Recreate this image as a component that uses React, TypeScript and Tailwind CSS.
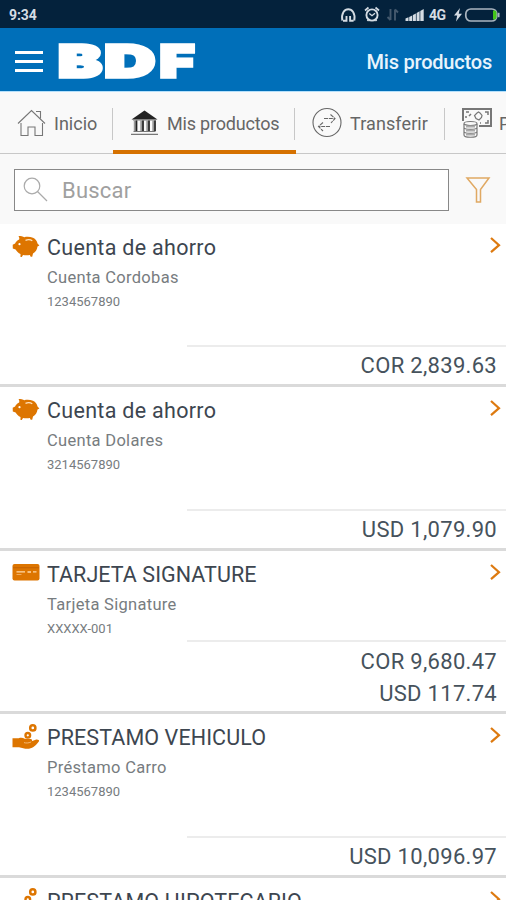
import type { ReactNode } from 'react';
import clsx from 'clsx';

type IconKind = 'piggy' | 'card' | 'loan';

interface Product {
  icon: IconKind;
  title: string;
  titleClass: string;
  subtitle: string;
  number: string;
  balances: string[];
}

const PRODUCTS: Product[] = [
  {
    icon: 'piggy',
    title: 'Cuenta de ahorro',
    titleClass: 'tracking-[0.3px]',
    subtitle: 'Cuenta Cordobas',
    number: '1234567890',
    balances: ['COR 2,839.63'],
  },
  {
    icon: 'piggy',
    title: 'Cuenta de ahorro',
    titleClass: 'tracking-[0.3px]',
    subtitle: 'Cuenta Dolares',
    number: '3214567890',
    balances: ['USD 1,079.90'],
  },
  {
    icon: 'card',
    title: 'TARJETA SIGNATURE',
    titleClass: 'tracking-[0.05px]',
    subtitle: 'Tarjeta Signature',
    number: 'XXXXX-001',
    balances: ['COR 9,680.47', 'USD 117.74'],
  },
  {
    icon: 'loan',
    title: 'PRESTAMO VEHICULO',
    titleClass: 'tracking-[0.1px]',
    subtitle: 'Préstamo Carro',
    number: '1234567890',
    balances: ['USD 10,096.97'],
  },
  {
    icon: 'loan',
    title: 'PRESTAMO HIPOTECARIO',
    titleClass: 'tracking-[0.1px]',
    subtitle: 'Préstamo Casa',
    number: '1234567890',
    balances: [],
  },
];

function ProductIcon({ kind }: { kind: IconKind }) {
  if (kind === 'piggy') {
    return (
      <svg className="mt-px" width="28" height="24" viewBox="0 0 28 24" fill="#dd7500">
        <path d="M6.500 1c2.300 0 4.500.6 5.800 1.200C14.500 1.500 18 1.500 21 2.800c2.600 1.200 4.100 3.200 4.500 5.800l1.900 2-1.900.8c-.4 3-2 5.700-4.500 7.200L20.200 21.800h-1.500l-.9-1.800c-2.500.5-4.800.4-6.800-.1L9.800 22H8.500l0-3C6.300 17.800 4.600 16.200 3.600 14.400L.8 13.400.7 9.800l2.400-1.300c.8-1.600 2.100-2.900 4-3.900C7.600 3.500 7.200 2 6.500 1z" />
        <circle cx="7.500" cy="9.200" r="1.100" fill="#fff" />
        <path d="M13.500 5.400c2.300-1 5-.8 6.800.4" fill="none" stroke="#ffe3bf" strokeWidth="1.200" />
      </svg>
    );
  }
  if (kind === 'card') {
    return (
      <svg width="28" height="24" viewBox="0 0 28 24">
        <rect x="0.500" y="3" width="27" height="16.600" rx="2" fill="#dd7500" />
        <path d="M1 6.700h26" stroke="#c96500" strokeWidth="1.200" />
        <path d="M4.500 10.800h8.500M15.500 11h3.500M21 10.800h3.500" stroke="#ffd9a8" strokeWidth="1.300" />
        <path d="M4.500 13.500h5" stroke="#f0a959" strokeWidth="1" />
      </svg>
    );
  }
  return (
    <svg width="28" height="26" viewBox="0 0 28 26" fill="none" stroke="#dd7500">
      <circle cx="20.800" cy="3.900" r="2.600" strokeWidth="2.500" />
      <circle cx="15.800" cy="11.300" r="2.300" strokeWidth="2.400" />
      <path
        d="M.5 14.300h6.200c2-.7 4.300-.6 6 .5l6.200.3c1.600.2 1.700 2 .1 2.400l4.600-1.700c1.900-.6 4.100.3 3.400 1.500-2.500 3.400-5.500 7-10 7.400-4 .2-6.800-.6-10-1.500H.5z"
        fill="#dd7500"
        stroke="none"
      />
      <path d="M12 18.600c2 .6 4.500.6 7-.6" stroke="#f9c88e" strokeWidth=".8" />
    </svg>
  );
}

function StatusBar() {
  return (
    <div className="flex h-[28px] shrink-0 items-center bg-[#04223c] pr-[6px] pl-[9px] text-[#d5dce3]">
      <span className="mt-[3px] text-[14px] font-bold tracking-[-0.1px]">9:34</span>
      <svg className="ml-auto" width="160" height="28" viewBox="0 0 160 28" fill="none">
        {/* headset */}
        <path d="M2.300 20.500C-.2 5.500 16.800 5.500 14.300 20.500M3 20.700h3.500v-4.700M13.600 20.700h-3.500v-4.700" stroke="#d5dce3" strokeWidth="1.900" />
        {/* alarm */}
        <circle cx="32" cy="15" r="5.600" stroke="#d5dce3" strokeWidth="1.900" />
        <path d="M25 10.500l3.500-3M39 10.500l-3.500-3M27.500 21l1-1.500M36.500 21l-1-1.500" stroke="#d5dce3" strokeWidth="1.700" />
        <path d="M29.300 13.500l2.700 2.200 3-2.500" stroke="#d5dce3" strokeWidth="1.400" />
        {/* data arrows */}
        <path d="M50.500 9v11M47.500 17l3 3M55 20.500v-11M58 12.500l-3-3" stroke="#44596d" strokeWidth="1.900" />
        {/* signal */}
        <path d="M65.500 21v-2.500l3-1.200V21zM69.200 21v-4l3-1.600V21zM72.900 21v-6l3-1.600V21zM76.600 21v-8l3-1.700V21zM80.300 21v-10l3.400-2V21z" fill="#d5dce3" />
        <text x="89" y="20" fill="#d5dce3" fontSize="14" fontWeight="700" fontFamily="Roboto, sans-serif" textLength="17">
          4G
        </text>
        {/* charging */}
        <path d="M120 8l-6 7.500h3.200L116 21.500l6-7.800h-3.300z" fill="#d5dce3" />
        <rect x="125.800" y="9" width="31" height="12" rx="5" stroke="#aab5c0" strokeWidth="1.700" />
        <path d="M153 10.500h1.500c1.600 0 2 1.300 2 2.500v4c0 1.400-.6 2.500-2 2.500H153z" fill="#43c51a" />
        <path d="M158.700 12.800v4.400" stroke="#aab5c0" strokeWidth="1.700" />
      </svg>
    </div>
  );
}

function Header() {
  return (
    <header className="flex h-[64px] shrink-0 items-center border-b border-[#b5e0fb] bg-[#006fb9] pr-[14px] pl-[15px] text-white">
      <div className="mt-[3px] flex flex-col gap-[6px]">
        <div className="h-[3px] w-[28px] bg-white" />
        <div className="h-[3px] w-[28px] bg-white" />
        <div className="h-[3px] w-[28px] bg-white" />
      </div>
      {/* each letter is stretched on its own to get the wide wordmark */}
      <svg
        className="ml-[13px]"
        width="142"
        height="48"
        viewBox="0 0 142 48"
        fill="#fff"
        stroke="#fff"
        strokeWidth="3.500"
        fontFamily="Inter, sans-serif"
        fontWeight="900"
        fontSize="44"
      >
        <text transform="translate(2.200 41) scale(1.480 1)">B</text>
        <text transform="translate(48.600 41) scale(1.590 1)">D</text>
        <text transform="translate(103.700 41) scale(1.340 1)">F</text>
      </svg>
      <h1 className="mt-[5px] ml-auto text-[20px] font-medium tracking-[-0.2px] text-[#e8f4fc]">Mis productos</h1>
    </header>
  );
}

function Tab({ className, children }: { className: string; children: ReactNode }) {
  return (
    <div className={clsx('flex shrink-0 items-center text-[18px] text-[#666]', className)}>
      {children}
    </div>
  );
}

function Divider() {
  return <div className="mt-[16px] h-[32px] w-px shrink-0 bg-[#c8c8c8]" />;
}

function Tabs() {
  return (
    <nav className="flex h-[62px] w-full shrink-0 overflow-hidden shadow-[inset_0_-1px_0_#c8c8c8]">
      <Tab className="w-[112px] pl-[17px]">
        <svg width="30" height="30" viewBox="0 0 30 30" fill="none" stroke="#777" strokeWidth="1.100">
          <path d="M1 15.500L14.500 2.500 28 15.500M4 15v12.500h7v-8.500h7v8.500h7.500V15" />
          <path d="M19 3.500h4.500v7" />
        </svg>
        <span className="ml-[7px]">Inicio</span>
      </Tab>
      <Divider />
      <Tab className="w-[183px] border-b-4 border-[#d57100] pt-[4px] pl-[17px]">
        <svg width="30" height="28" viewBox="0 0 30 28">
          <path d="M14.500 1.500L27.500 10.500H1.500z" fill="#222" />
          <path d="M3 11h23M3.500 22.500h22M1 25.300h27" stroke="#777" strokeWidth="1.200" />
          <path d="M5.500 11.500v10.500M12 11.500v10.500M18 11.500v10.500M24 11.500v10.500" stroke="#999" strokeWidth="3.400" />
          <path d="M6.500 11.500v10.500M13 11.500v10.500M19 11.500v10.500M25 11.500v10.500" stroke="#222" strokeWidth="1.600" />
        </svg>
        <span className="ml-[7px] tracking-[-0.2px]">Mis productos</span>
      </Tab>
      <div className="-ml-[2px]">
        <Divider />
      </div>
      <Tab className="w-[149px] pl-[16px]">
        <svg width="32" height="32" viewBox="0 0 32 32" fill="none" stroke="#666" strokeWidth="1.100">
          <circle cx="16" cy="15.500" r="14" />
          <path d="M13 11.500h11M19.500 7.500l4.500 4-4 4.500M19 19.500H8M12 15.500l-4.500 4 4.500 4.500" strokeDasharray="4 .8" />
        </svg>
        <span className="ml-[7px] tracking-[0.1px]">Transferir</span>
      </Tab>
      <Divider />
      <Tab className="pl-[16px]">
        <svg width="32" height="32" viewBox="0 0 32 32" fill="none" stroke="#777" strokeWidth="1.200">
          <path d="M2 14V2h28v17H18" strokeWidth="2" />
          <path d="M5 11V9M5 5h3M24 5h3v3M27 13v3h-3M20 16h-1M10 7l-2 2" strokeWidth="1.500" />
          <path d="M16 6l1.500-1L19 6l2 2.500-.5 2L18 13l-3-1.500-1.500-3z" />
          <ellipse cx="9.500" cy="16.500" rx="6.500" ry="2" />
          <path d="M3 17v11c0 3 13 3 13 0V17M3 20.500c0 2.500 13 2.500 13 0M3 24.500c0 2.500 13 2.500 13 0" />
          <path d="M5 19.500h9M5 23.500h9M5 27.500h9" stroke="#aaa" strokeWidth="2" />
        </svg>
        <span className="ml-[6px]">Pagar</span>
      </Tab>
    </nav>
  );
}

function SearchBar() {
  return (
    <div className="flex h-[70px] shrink-0 items-start pt-[15px] pl-[14px]">
      <div className="flex h-[42px] w-[435px] items-center border border-[#888] bg-white pl-[7px]">
        <svg width="28" height="28" viewBox="0 0 28 28" fill="none" stroke="#aaa" strokeWidth="1.200">
          <circle cx="10" cy="10" r="7.800" />
          <path d="M15.500 15.500L25 25" />
        </svg>
        <span className="ml-[12px] text-[22px] tracking-[0.2px] text-[#a0a0a0]">Buscar</span>
      </div>
      <svg className="mt-[7px] ml-[16px]" width="26" height="28" viewBox="0 0 26 28" fill="none" stroke="#e0a963" strokeWidth="1.500">
        <path d="M2 2h22l-8.500 11.500V26h-4V13.500z" />
      </svg>
    </div>
  );
}

function ProductRow({ product }: { product: Product }) {
  const { balances } = product;

  return (
    <li className="flex h-[163.400px] shrink-0 flex-col border-b-3 border-[#dadada] bg-white">
      <div className="flex pt-[10px] pl-[12px]">
        <div className="h-[26px] w-[28px] shrink-0">
          <ProductIcon kind={product.icon} />
        </div>
        <div className="ml-[7px] flex flex-col whitespace-nowrap">
          <span className={clsx('text-[21.500px] leading-[28px] text-[#3d4650]', product.titleClass)}>{product.title}</span>
          <span className="mt-[4px] text-[16.500px] leading-[24px] tracking-[0.300px] text-[#777c80]">{product.subtitle}</span>
          <span className="mt-px text-[13px] leading-[22px] text-[#777c80]">{product.number}</span>
        </div>
        <svg className="mt-[2px] mr-[4px] ml-auto" width="13" height="18" viewBox="0 0 13 18" fill="none" stroke="#dd7a10" strokeWidth="2.200">
          <path d="M2 2l8 7.200-8 7" />
        </svg>
      </div>
      {balances.length > 0 && (
        <div
          className={clsx(
            'mt-auto ml-[187px] flex flex-col items-end border-t-2 border-[#ececec] pr-[9px]',
            balances.length > 1 ? 'pt-[4px] pb-[3px]' : 'pt-[3px] pb-[2px]'
          )}
        >
          {balances.map((text) => (
            <span key={text} className="text-[22px] leading-[32px] tracking-[0.300px] text-[#46525c]">
              {text}
            </span>
          ))}
        </div>
      )}
    </li>
  );
}

export default function App() {
  return (
    <div className="flex h-[900px] w-[506px] flex-col overflow-hidden bg-[#f9f9f9] font-['Roboto',sans-serif]">
      <StatusBar />
      <Header />
      <Tabs />
      <SearchBar />
      <ul className="flex min-h-0 flex-1 flex-col overflow-hidden">
        {PRODUCTS.map((p, i) => (
          <ProductRow key={i} product={p} />
        ))}
      </ul>
    </div>
  );
}
